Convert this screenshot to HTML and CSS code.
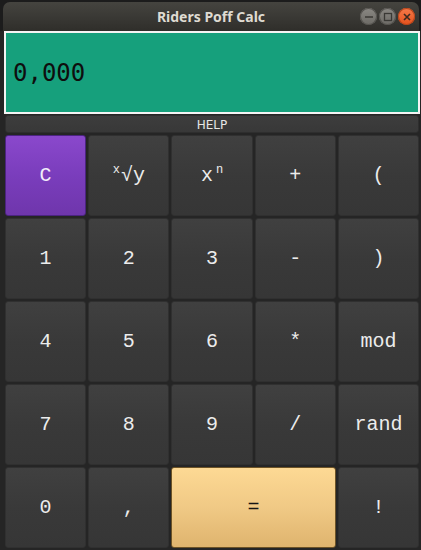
FILE: index.html
```html
<!DOCTYPE html>
<html>
<head>
<meta charset="utf-8">
<link rel="stylesheet" href="styles.css">
</head>
<body>
<div class="window">
  <div class="titlebar">
    <span class="title">Riders Poff Calc</span>
    <div class="controls">
      <span class="wbtn min"><svg width="16" height="16" viewBox="0 0 16 16"><line x1="4" y1="8" x2="12" y2="8" stroke="#3a3935" stroke-width="1.5"/></svg></span>
      <span class="wbtn max"><svg width="16" height="16" viewBox="0 0 16 16"><rect x="4.5" y="4.5" width="7" height="7" fill="none" stroke="#3a3935" stroke-width="1.3"/></svg></span>
      <span class="wbtn close"><svg width="16" height="16" viewBox="0 0 16 16"><path d="M5 5 L11 11 M11 5 L5 11" stroke="#3a2a20" stroke-width="1.6"/></svg></span>
    </div>
  </div>
  <div class="content">
    <div class="display">0,000</div>
    <div class="help">HELP</div>
    <div class="keys">
      <div class="key clear">C</div>
      <div class="key"><span class="sup">x</span>√y</div>
      <div class="key">x<span class="sup2">n</span></div>
      <div class="key">+</div>
      <div class="key">(</div>
      <div class="key">1</div>
      <div class="key">2</div>
      <div class="key">3</div>
      <div class="key">-</div>
      <div class="key">)</div>
      <div class="key">4</div>
      <div class="key">5</div>
      <div class="key">6</div>
      <div class="key">*</div>
      <div class="key">mod</div>
      <div class="key">7</div>
      <div class="key">8</div>
      <div class="key">9</div>
      <div class="key">/</div>
      <div class="key">rand</div>
      <div class="key">0</div>
      <div class="key">,</div>
      <div class="key equals">=</div>
      <div class="key">!</div>
    </div>
  </div>
</div>
</body>
</html>
```
FILE: styles.css
```css
html, body {
  margin: 0;
  padding: 0;
  background: #1c1c1c;
  width: 421px;
  height: 550px;
  overflow: hidden;
}
.window {
  width: 421px;
  height: 550px;
  display: flex;
  flex-direction: column;
}
.titlebar {
  margin: 2px 2px 0 3px;
  height: 29px;
  border-radius: 7px 7px 0 0;
  background: linear-gradient(#45443f, #3a3935 50%, #2f2e2a);
  position: relative;
  display: flex;
  align-items: center;
  justify-content: center;
}
.title {
  font-family: "Noto Sans", sans-serif;
  font-weight: bold;
  font-size: 14px;
  color: #dfdbd2;
}
.controls {
  position: absolute;
  right: 4px;
  top: 6px;
  display: flex;
  gap: 2px;
}
.wbtn {
  width: 17px;
  height: 17px;
  border-radius: 50%;
  display: flex;
  align-items: center;
  justify-content: center;
  background: linear-gradient(#8a8883, #6c6a65);
  box-shadow: inset 0 0 0 1px #55534f;
}
.wbtn svg { width: 16px; height: 16px; }
.wbtn.close {
  background: linear-gradient(#f47a4a, #e4511c);
  box-shadow: inset 0 0 0 1px #b8441a;
}
.content {
  flex: 1;
  background: #252525;
  padding: 0 1px 0 4px;
  display: flex;
  flex-direction: column;
}
.display {
  height: 79px;
  border: 2px solid #f4f4f4;
  background: #16a07c;
  font-family: "DejaVu Sans Mono", monospace;
  font-size: 24px;
  color: #0e0e0e;
  display: flex;
  align-items: center;
  padding-left: 7px;
}
.help {
  margin: 1px 1px 0 1px;
  border: 1px solid #2e2e2e;
  border-radius: 3px;
  background: linear-gradient(#3d3d3d, #383838);
  font-family: "DejaVu Sans", sans-serif;
  font-size: 12px;
  color: #e6e6e6;
  display: flex;
  align-items: center;
  justify-content: center;
  line-height: 1;
  padding-top: 1px;
  box-sizing: border-box;
  height: 18px;
}
.keys {
  margin: 2px 1px 0 1px;
  display: grid;
  grid-template-columns: repeat(5, 1fr);
  grid-template-rows: repeat(5, 81px);
  gap: 2px;
}
.key {
  border: 1px solid #303030;
  border-radius: 3px;
  background: linear-gradient(#404040, #393939 50%, #363636);
  font-family: "Liberation Mono", monospace;
  font-size: 20px;
  color: #ececec;
  display: flex;
  align-items: center;
  justify-content: center;
}
.key.clear {
  background: linear-gradient(#8a48cc, #7a3dbc 50%, #6f36ac);
  border-color: #4b2480;
  color: #f2eefa;
}
.key.equals {
  grid-column: span 2;
  background: linear-gradient(#fdd994, #f0c985 50%, #dfb46e);
  border-color: #6d5326;
  color: #151515;
}
.sup {
  font-size: 12px;
  position: relative;
  top: -6px;
  margin-right: 1px;
}
.sup2 {
  font-size: 12px;
  position: relative;
  top: -6px;
  margin-left: 3px;
}
```
